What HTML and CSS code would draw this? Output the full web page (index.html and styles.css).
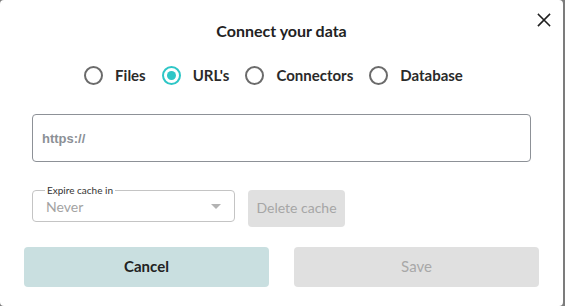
FILE: index.html
```html
<!DOCTYPE html>
<html lang="en">
<head>
<meta charset="utf-8">
<title>Connect your data</title>
<link rel="stylesheet" href="styles.css">
</head>
<body>
<div class="dialog">
  <button class="close" aria-label="Close">
    <svg width="14" height="14" viewBox="0 0 14 14"><path d="M1.5 1.5 L12.5 12.5 M12.5 1.5 L1.5 12.5" stroke="#1f1f1f" stroke-width="1.6" stroke-linecap="square" fill="none"/></svg>
  </button>
  <h2 class="title">Connect your data</h2>
  <div class="radios">
    <label class="radio"><span class="circle"></span><span class="rlabel">Files</span></label>
    <label class="radio"><span class="circle checked"></span><span class="rlabel">URL's</span></label>
    <label class="radio"><span class="circle"></span><span class="rlabel">Connectors</span></label>
    <label class="radio"><span class="circle"></span><span class="rlabel">Database</span></label>
  </div>
  <div class="form">
    <div class="url"><span class="placeholder">https://</span></div>
    <div class="cache-row">
      <fieldset class="select">
        <legend>Expire cache in</legend>
        <span class="value">Never</span>
        <span class="arrow"></span>
      </fieldset>
      <button class="delete">Delete cache</button>
    </div>
  </div>
  <div class="actions">
    <button class="btn cancel">Cancel</button>
    <button class="btn save">Save</button>
  </div>
</div>
</body>
</html>
```
FILE: styles.css
```css
html, body {
  margin: 0;
  padding: 0;
}
body {
  background: #7c7c7c;
  width: 565px;
  height: 306px;
  overflow: hidden;
  font-family: Lato, "Noto Sans", sans-serif;
  color: #222;
}
.dialog {
  position: relative;
  width: 563px;
  height: 306px;
  background: #fff;
  border-radius: 4px;
  box-sizing: border-box;
  padding: 19px 24px 0;
}
.close {
  position: absolute;
  top: 13px;
  right: 12px;
  width: 14px;
  height: 14px;
  padding: 0;
  border: 0;
  background: none;
  display: flex;
}
.title {
  margin: 0;
  height: 24px;
  line-height: 24px;
  font-size: 16px;
  font-weight: 700;
  text-align: center;
  color: #222;
}
.radios {
  margin: 20px -24px 0;
  padding-right: 16px;
  height: 24px;
  display: flex;
  justify-content: center;
  align-items: center;
  gap: 16px;
}
.radio {
  display: flex;
  align-items: center;
  gap: 12px;
}
.circle {
  width: 19px;
  height: 19px;
  box-sizing: border-box;
  border: 2px solid #6b6b6b;
  border-radius: 50%;
  display: flex;
  align-items: center;
  justify-content: center;
}
.circle.checked {
  border-color: #2ec6c6;
}
.circle.checked::after {
  content: "";
  width: 9px;
  height: 9px;
  border-radius: 50%;
  background: #2ec6c6;
}
.rlabel {
  font-size: 15px;
  font-weight: 700;
  color: #2a2a2a;
}
.form {
  padding: 0 8px;
}
.url {
  margin-top: 27px;
  height: 48px;
  box-sizing: border-box;
  border: 1px solid #8d9197;
  border-radius: 4px;
  display: flex;
  align-items: center;
  padding-left: 9px;
}
.placeholder {
  font-family: "Liberation Sans", Arial, sans-serif;
  font-weight: 700;
  font-size: 13px;
  color: #8b9096;
}
.cache-row {
  margin-top: 23px;
  display: flex;
  align-items: flex-start;
  gap: 13px;
}
.select {
  margin: 0;
  width: 203px;
  height: 37px;
  box-sizing: border-box;
  border: 1px solid #c4c4c4;
  border-radius: 4px;
  padding: 0 12px 0 13px;
  display: flex;
  align-items: center;
  justify-content: space-between;
}
.select legend {
  font-size: 10px;
  line-height: 11px;
  padding: 0 2px;
  margin-left: -1px;
  color: #333;
}
.value {
  font-size: 14px;
  color: #a3a3a3;
  margin-top: -4px;
}
.arrow {
  width: 0;
  height: 0;
  border-left: 5px solid transparent;
  border-right: 5px solid transparent;
  border-top: 5px solid #b3b3b3;
  margin-right: 1px;
  margin-top: -4px;
}
.delete {
  margin-top: 5px;
  width: 97px;
  height: 37px;
  border: 0;
  border-radius: 4px;
  background: #e0e0e0;
  color: #a6a6a6;
  font-family: Lato, "Noto Sans", sans-serif;
  font-size: 14px;
  padding: 0 0 2px;
}
.actions {
  margin-top: 20px;
  display: flex;
  gap: 25px;
}
.btn {
  width: 246px;
  height: 40px;
  border: 0;
  border-radius: 4px;
  font-family: Lato, "Noto Sans", sans-serif;
  font-size: 15px;
  padding: 0 0 2px;
}
.cancel {
  background: #c9dfe0;
  color: #222;
  font-weight: 700;
}
.save {
  background: #e0e0e0;
  color: #a8a8a8;
}
```
